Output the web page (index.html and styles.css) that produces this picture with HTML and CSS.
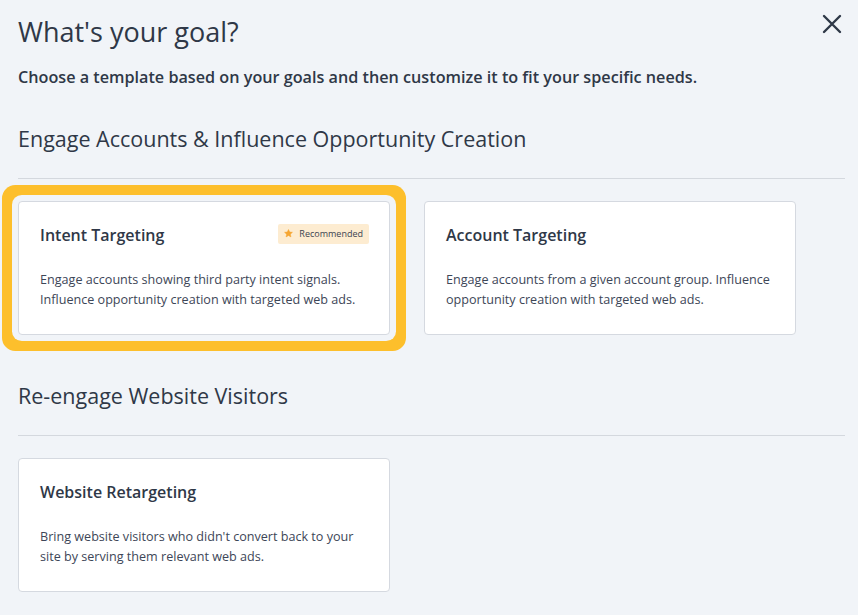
FILE: index.html
```html
<!DOCTYPE html>
<html lang="en">
<head>
<meta charset="utf-8">
<title>What's your goal?</title>
<link rel="stylesheet" href="styles.css">
</head>
<body>
<div class="page">
  <header class="header">
    <h1 class="title">What's your goal?</h1>
    <button class="close" aria-label="Close">
      <svg width="20" height="20" viewBox="0 0 20 20" aria-hidden="true">
        <path d="M2 2 L18 18 M18 2 L2 18" stroke="#2f3847" stroke-width="2.4" stroke-linecap="round" fill="none"/>
      </svg>
    </button>
  </header>
  <p class="subtitle">Choose a template based on your goals and then customize it to fit your specific needs.</p>

  <section class="section">
    <h2 class="section-title">Engage Accounts &amp; Influence Opportunity Creation</h2>
    <hr class="divider">
    <div class="cards">
      <div class="card selected">
        <div class="card-head">
          <h3 class="card-title">Intent Targeting</h3>
          <span class="badge">
            <svg class="star" width="9" height="9" viewBox="0 0 24 24" aria-hidden="true">
              <path d="M12 1.5 L15.1 8.2 L22.4 8.9 L16.9 13.8 L18.5 21 L12 17.3 L5.5 21 L7.1 13.8 L1.6 8.9 L8.9 8.2 Z" fill="#f6a632" stroke="#f6a632" stroke-width="1.5" stroke-linejoin="round"/>
            </svg>
            Recommended
          </span>
        </div>
        <p class="card-desc">Engage accounts showing third party intent signals. Influence opportunity creation with targeted web ads.</p>
      </div>
      <div class="card">
        <div class="card-head">
          <h3 class="card-title">Account Targeting</h3>
        </div>
        <p class="card-desc">Engage accounts from a given account group. Influence opportunity creation with targeted web ads.</p>
      </div>
    </div>
  </section>

  <section class="section second">
    <h2 class="section-title">Re-engage Website Visitors</h2>
    <hr class="divider">
    <div class="cards">
      <div class="card">
        <div class="card-head">
          <h3 class="card-title">Website Retargeting</h3>
        </div>
        <p class="card-desc">Bring website visitors who didn't convert back to your site by serving them relevant web ads.</p>
      </div>
    </div>
  </section>
</div>
</body>
</html>
```

FILE: styles.css
```css
* { box-sizing: border-box; }

html, body {
  margin: 0;
  padding: 0;
  background: #f1f4f8;
}

body {
  font-family: "Open Sans", "Noto Sans", "Liberation Sans", sans-serif;
  color: #2d3748;
}

.page {
  padding: 14px 13px 20px 18px;
}

.header {
  display: flex;
  justify-content: space-between;
  align-items: flex-start;
}

.title {
  margin: 0;
  font-size: 27px;
  line-height: 36px;
  font-weight: 400;
  color: #2f3847;
}

.close {
  background: none;
  border: 0;
  padding: 0;
  margin: 0 3px 0 0;
  width: 20px;
  height: 20px;
  cursor: pointer;
}
.close svg { display: block; }

.subtitle {
  margin: 16px 0 0;
  font-size: 16.2px;
  line-height: 22px;
  font-weight: 600;
  color: #2f3847;
}

.section {
  margin-top: 35px;
}
.section.second {
  margin-top: 45px;
}

.section-title {
  margin: 0;
  padding-top: 1px;
  font-size: 21.5px;
  line-height: 30px;
  font-weight: 400;
  color: #2f3847;
}

.divider {
  margin: 24px 0 0;
  border: 0;
  border-top: 1px solid #d4d8de;
  height: 0;
}

.cards {
  display: grid;
  grid-template-columns: repeat(2, 372px);
  column-gap: 34px;
  margin-top: 22px;
}

.card {
  background: #ffffff;
  border: 1px solid #d5d9e0;
  border-radius: 4px;
  padding: 21px 20px 24px 21px;
}

.card.selected {
  box-shadow: 0 0 0 6px #f1f4f8, 0 0 0 16px #fdbf2c;
}

.card-head {
  display: flex;
  justify-content: space-between;
  align-items: center;
  height: 24px;
}

.card-title {
  margin: 0;
  font-size: 16px;
  line-height: 24px;
  font-weight: 600;
  color: #2f3847;
}

.badge {
  display: inline-flex;
  align-items: center;
  gap: 6px;
  height: 20px;
  padding: 0 6px 0 6px;
  background: #fdecd1;
  border-radius: 2px;
  font-size: 9px;
  font-weight: 500;
  color: #3b4350;
  margin-top: -3px;
}
.star { display: block; }

.card-desc {
  margin: 23px 0 0;
  font-size: 12.6px;
  line-height: 20px;
  color: #3d4657;
}
```
